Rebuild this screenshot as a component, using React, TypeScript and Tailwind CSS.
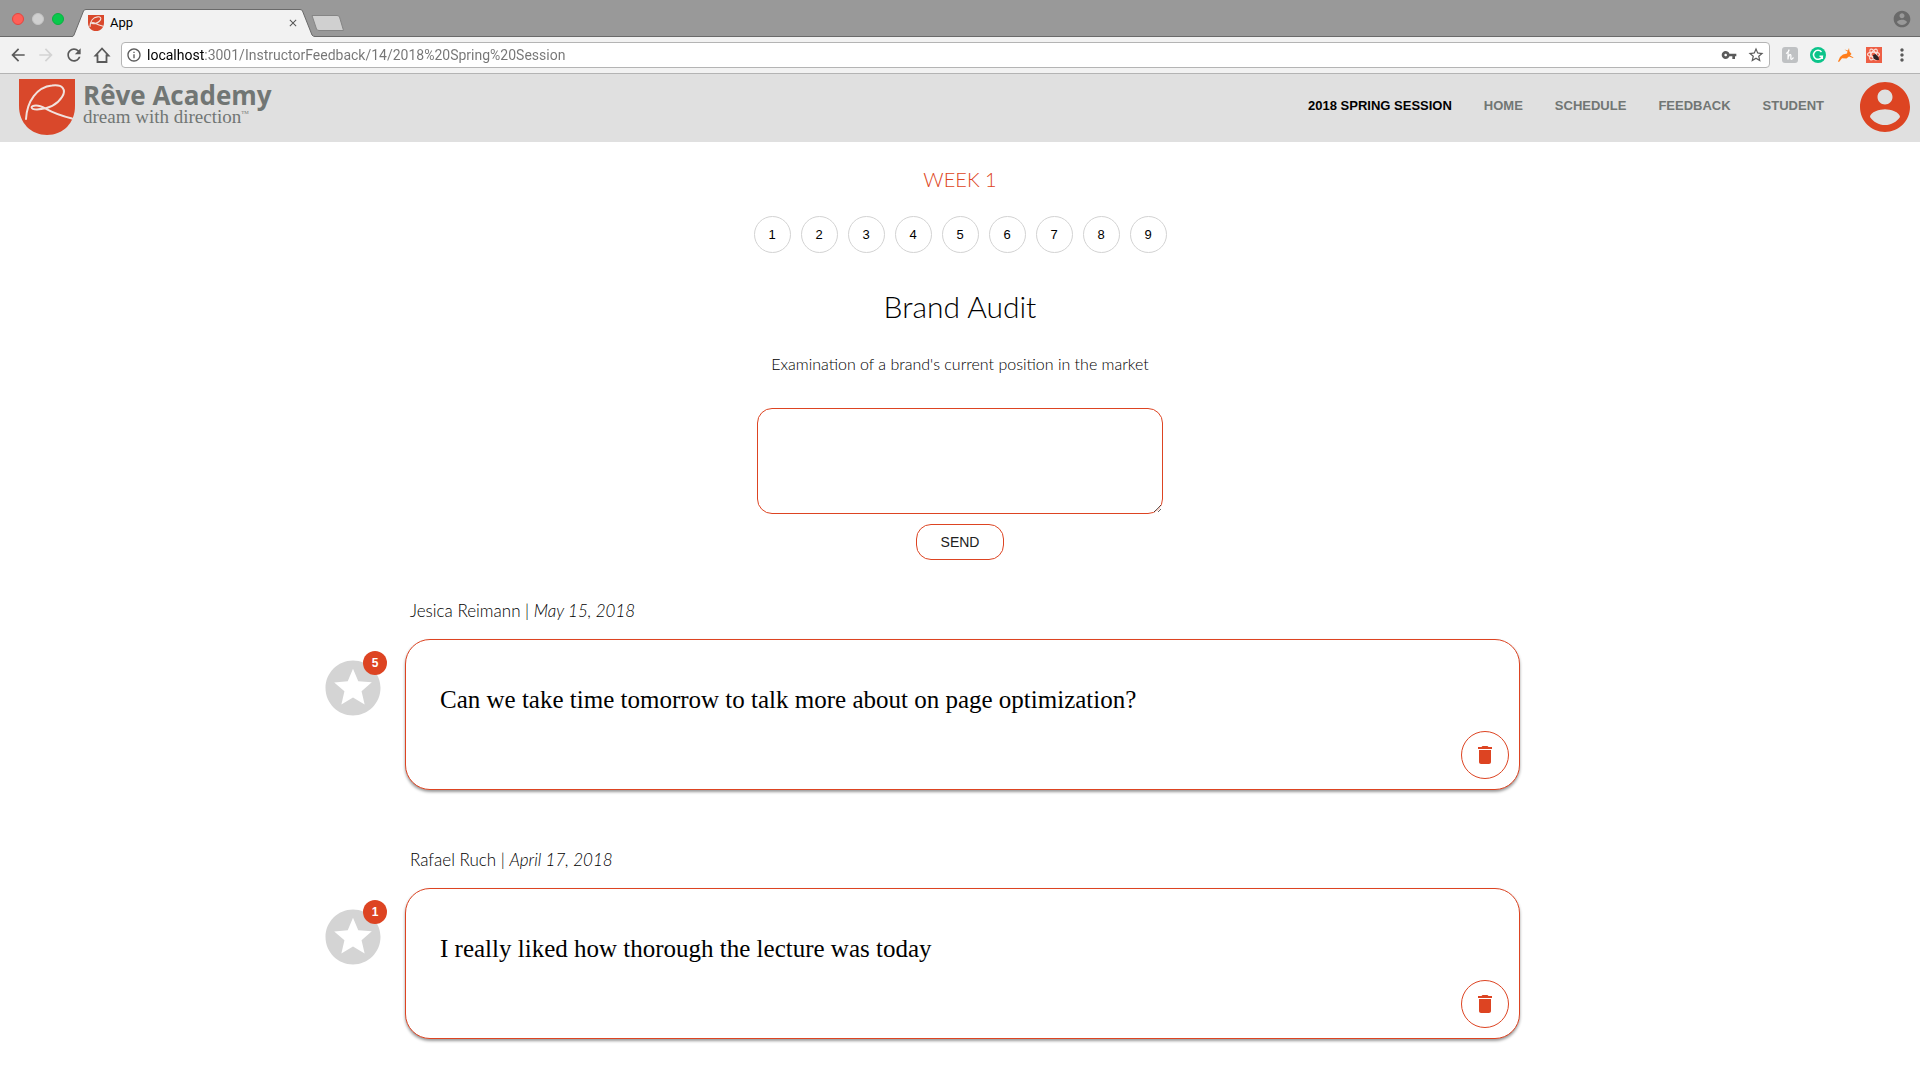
import type { ReactNode } from 'react';

function Icon({ d, className }: { d: string; className: string }) {
  return (
    <svg viewBox="0 0 24 24" fill="currentColor" aria-hidden="true" className={className}>
      <path d={d} />
    </svg>
  );
}

const paths = {
  back: 'M20 11H7.83l5.59-5.59L12 4l-8 8 8 8 1.41-1.41L7.83 13H20v-2z',
  forward: 'M12 4l-1.41 1.41L16.17 11H4v2h12.17l-5.58 5.59L12 20l8-8z',
  reload:
    'M17.65 6.35C16.2 4.9 14.21 4 12 4c-4.42 0-7.99 3.58-7.99 8s3.57 8 7.99 8c3.73 0 6.84-2.55 7.73-6h-2.08c-.82 2.33-3.04 4-5.65 4-3.31 0-6-2.69-6-6s2.69-6 6-6c1.66 0 3.14.69 4.22 1.78L13 11h7V4l-2.35 2.35z',
  info: 'M11 17h2v-6h-2v6zm1-15C6.48 2 2 6.48 2 12s4.48 10 10 10 10-4.48 10-10S17.52 2 12 2zm0 18c-4.41 0-8-3.59-8-8s3.59-8 8-8 8 3.59 8 8-3.59 8-8 8zM11 9h2V7h-2v2z',
  key: 'M12.65 10C11.83 7.67 9.61 6 7 6c-3.31 0-6 2.69-6 6s2.69 6 6 6c2.61 0 4.83-1.67 5.65-4H17v4h4v-4h2v-4H12.65zM7 14c-1.1 0-2-.9-2-2s.9-2 2-2 2 .9 2 2-.9 2-2 2z',
  star: 'M22 9.24l-7.19-.62L12 2 9.19 8.63 2 9.24l5.46 4.73L5.82 21 12 17.27 18.18 21l-1.63-7.03L22 9.24zM12 15.4l-3.76 2.27 1-4.28-3.32-2.88 4.38-.38L12 6.1l1.71 4.04 4.38.38-3.32 2.88 1 4.28L12 15.4z',
  more: 'M12 8c1.1 0 2-.9 2-2s-.9-2-2-2-2 .9-2 2 .9 2 2 2zm0 2c-1.1 0-2 .9-2 2s.9 2 2 2 2-.9 2-2-.9-2-2-2zm0 6c-1.1 0-2 .9-2 2s.9 2 2 2 2-.9 2-2-.9-2-2-2z',
  account:
    'M12 2C6.48 2 2 6.48 2 12s4.48 10 10 10 10-4.48 10-10S17.52 2 12 2zm0 3c1.66 0 3 1.34 3 3s-1.34 3-3 3-3-1.34-3-3 1.34-3 3-3zm0 14.2c-2.5 0-4.71-1.28-6-3.22.03-1.99 4-3.08 6-3.08 1.99 0 5.97 1.09 6 3.08-1.29 1.94-3.5 3.22-6 3.22z',
  stars:
    'M11.99 2C6.47 2 2 6.48 2 12s4.47 10 9.99 10C17.52 22 22 17.52 22 12S17.52 2 11.99 2zm4.24 16L12 15.45 7.77 18l1.12-4.81-3.73-3.23 4.92-.42L12 5l1.92 4.53 4.92.42-3.73 3.23L16.23 18z',
  trash: 'M6 19c0 1.1.9 2 2 2h8c1.1 0 2-.9 2-2V7H6v12zM19 4h-3.5l-1-1h-5l-1 1H5v2h14V4z',
  close: 'M19 6.41L17.59 5 12 10.59 6.41 5 5 6.41 10.59 12 5 17.59 6.41 19 12 13.41 17.59 19 19 17.59 13.41 12z',
};

function Shield({ className, stroke }: { className: string; stroke: number }) {
  return (
    <svg viewBox="0 0 56 56" fill="none" aria-hidden="true" className={className}>
      <path d="M0 0H56V27C56 44 44 56 28 56S0 44 0 27Z" fill="#d9482b" />
      <path
        d="M7 40C8 22 18 8 33 6.500C44 5 47.500 11 43 18C38 26 29 30 18 30.500C11 30.500 11 26.500 17 26.500C26 26.500 26 33 53 39.500"
        stroke="#f1e2de"
        strokeWidth={stroke}
        strokeLinecap="round"
      />
    </svg>
  );
}

function TabStrip() {
  return (
    <div className="flex h-[37px] items-end border-b border-[#6a6a6a] bg-[#999999]">
      <div className="flex h-full w-[72px] items-center gap-2 pt-0.5 pl-3">
        <button aria-label="Close window" className="size-3 rounded-full border border-[#e2463f] bg-[#ff5f57]" />
        <button aria-label="Minimize window" className="size-3 rounded-full border border-[#c4c4c4] bg-[#d0d0d0]" />
        <button aria-label="Zoom window" className="size-3 rounded-full border border-[#0bb040] bg-[#08c94c]" />
      </div>
      <div className="relative -mb-px h-7 w-[243px]">
        <svg viewBox="0 0 243 28" fill="none" aria-hidden="true" className="absolute inset-0 size-full">
          <path d="M0 28L2 26L11.500 2Q12 .5 14 .5H228Q230 .5 230.500 2L240 26L243 28Z" fill="#f2f2f2" />
          <path d="M0 27.500Q1.500 27.500 2 26L11.500 2Q12 .5 14 .5H228Q230 .5 230.500 2L240 26Q241 27.500 243 27.500" stroke="#6a6a6a" />
        </svg>
        <div className="relative flex h-full items-center pr-4 pl-4">
          <Shield className="size-4" stroke={4} />
          <span className="grow pl-1.5 text-[13px] text-black">App</span>
          <button aria-label="Close tab" className="text-[#555]">
            <Icon d={paths.close} className="size-3" />
          </button>
        </div>
      </div>
      <button aria-label="New tab" className="mb-1 -ml-1">
        <svg viewBox="0 0 34 17" fill="none" aria-hidden="true" className="h-[17px] w-[34px]">
          <path d="M2 .5H26Q28 .5 28.500 2L32.500 15.500H8Q6 15.500 5.500 14L1 .5Z" fill="#d0d0d0" stroke="#858585" />
        </svg>
      </button>
      <button aria-label="Chrome profile" className="mr-2 mb-[7px] ml-auto text-[#6a6a6a]">
        <Icon d={paths.account} className="size-5" />
      </button>
    </div>
  );
}

function ToolButton({ label, className, children }: { label: string; className?: string; children: ReactNode }) {
  return (
    <button aria-label={label} className={className}>
      {children}
    </button>
  );
}

function Toolbar() {
  return (
    <div className="flex h-[37px] items-center border-b border-[#b4b4b4] bg-[#f2f2f2] text-[#5a5a5a]">
      <div className="flex w-[121px] items-center gap-2 pl-2">
        <ToolButton label="Back">
          <Icon d={paths.back} className="size-5" />
        </ToolButton>
        <ToolButton label="Forward" className="text-[#d3d3d3]">
          <Icon d={paths.forward} className="size-5" />
        </ToolButton>
        <ToolButton label="Reload">
          <Icon d={paths.reload} className="size-5" />
        </ToolButton>
        <ToolButton label="Home">
          <svg viewBox="0 0 20 20" fill="none" stroke="currentColor" strokeWidth="1.800" aria-hidden="true" className="size-5">
            <path d="M10 3.500L3.500 10.500H5.500V17H14.500V10.500H16.500Z" />
          </svg>
        </ToolButton>
      </div>
      <div className="flex h-[26px] grow items-center rounded border border-[#b4b4b4] bg-white pl-1">
        <Icon d={paths.info} className="size-4" />
        <input
          aria-label="Address"
          readOnly
          value="localhost:3001/InstructorFeedback/14/2018%20Spring%20Session"
          className="ml-[5px] min-w-0 grow bg-[linear-gradient(to_right,#000_58px,#757575_58px)] bg-clip-text text-[14px] text-transparent outline-none"
        />
        <div className="flex items-center gap-2.5 pr-1">
          <ToolButton label="Saved passwords">
            <Icon d={paths.key} className="size-4" />
          </ToolButton>
          <ToolButton label="Bookmark">
            <Icon d={paths.star} className="size-[18px]" />
          </ToolButton>
        </div>
      </div>
      <div className="flex items-center gap-3 pr-2.5 pl-3">
        <ToolButton label="Honey">
          <svg viewBox="0 0 16 16" fill="none" aria-hidden="true" className="size-4">
            <rect width="16" height="16" rx="3" fill="#bfc1c3" />
            <path
              d="M4 6.500C6 5.500 7.500 3 6.800 2.800C6 2.800 6 8 6 12.500C6 9 7.500 7.300 8.500 7.600C9.800 8.200 8 12 9.200 12.300C10.200 12.300 11 11.500 11.500 10.500"
              stroke="#fff"
              strokeWidth="1.300"
            />
          </svg>
        </ToolButton>
        <ToolButton label="Grammarly">
          <svg viewBox="0 0 16 16" fill="none" aria-hidden="true" className="size-4">
            <circle cx="8" cy="8" r="8" fill="#0cc48a" />
            <path d="M11.500 5A4.500 4.500 0 1 0 12.300 9.200H9.500M12.300 8.500V12" stroke="#fff" strokeWidth="1.500" />
          </svg>
        </ToolButton>
        <ToolButton label="Rabbit">
          <svg viewBox="0 0 16 16" fill="#ff7d1a" aria-hidden="true" className="size-4">
            <path d="M0 14.500L2 10L5 7.500L9 6.500L9.500 4.500L6.500 2.500L10 3.500L11 1L11.500 4.500L13.500 7L12 8.500L15.500 10.500L15 11L11 9.500L8.500 11.500L4 11.200L1 15Z" />
          </svg>
        </ToolButton>
        <ToolButton label="React Developer">
          <svg viewBox="0 0 16 16" fill="none" aria-hidden="true" className="size-4">
            <rect width="16" height="16" fill="#ee5f45" />
            <g stroke="#fbe0da" strokeWidth="1.100">
              <ellipse cx="7.500" cy="7.500" rx="6" ry="2.400" />
              <ellipse cx="7.500" cy="7.500" rx="6" ry="2.400" transform="rotate(60 7.500 7.500)" />
              <ellipse cx="7.500" cy="7.500" rx="6" ry="2.400" transform="rotate(120 7.500 7.500)" />
            </g>
            <path d="M7 8L9.500 7L12.500 10L13 13L10 13L7.500 11.500Z" fill="#2c2325" />
          </svg>
        </ToolButton>
        <ToolButton label="Menu">
          <Icon d={paths.more} className="-mx-0.5 size-5" />
        </ToolButton>
      </div>
    </div>
  );
}

function SiteHeader() {
  const links = ['HOME', 'SCHEDULE', 'FEEDBACK', 'STUDENT'];
  return (
    <header className="flex h-[68px] items-center justify-between bg-[#e0e0e0] pr-[5px] pb-0.5 pl-[19px]">
      <a href="#" className="flex items-center gap-2 text-[#717674]">
        <Shield className="size-14" stroke={2} />
        <span className="flex flex-col pb-1">
          <span className="font-['Open_Sans'] text-[26px] leading-6 font-bold">Rêve Academy</span>
          <span className="flex font-['Liberation_Serif'] text-[19px] leading-5">
            dream with direction<span className="text-[5px] leading-3">TM</span>
          </span>
        </span>
      </a>
      <div className="flex items-center gap-[31px]">
        <nav className="flex items-center gap-8 pb-0.5 text-[13px] font-bold text-[#717674]">
          <a href="#" className="text-black">
            2018 SPRING SESSION
          </a>
          {links.map((link) => (
            <a key={link} href="#">
              {link}
            </a>
          ))}
        </nav>
        <button aria-label="Account" className="text-[#dd4422]">
          <Icon d={paths.account} className="size-[60px]" />
        </button>
      </div>
    </header>
  );
}

interface Comment {
  author: string;
  date: string;
  text: string;
  stars: number;
}

const comments: Comment[] = [
  {
    author: 'Jesica Reimann',
    date: 'May 15, 2018',
    text: 'Can we take time tomorrow to talk more about on page optimization?',
    stars: 5,
  },
  { author: 'Rafael Ruch', date: 'April 17, 2018', text: 'I really liked how thorough the lecture was today', stars: 1 },
];

function CommentCard({ author, date, text, stars }: Comment) {
  return (
    <article className="flex">
      <div className="w-[85px] shrink-0 pt-14">
        <button aria-label={`${stars} stars`} className="relative block text-[#d4d4d4]">
          <Icon d={paths.stars} className="size-[66px]" />
          <span className="absolute -top-1 right-[-1px] flex size-6 items-center justify-center rounded-full bg-[#dd4422] text-[12px] font-bold text-white">
            {stars}
          </span>
        </button>
      </div>
      <div className="min-w-0 grow">
        <p className="pl-[5px] font-['Lato'] text-[17px] leading-6 font-light text-black">
          {author} | <em>{date}</em>
        </p>
        <div className="mt-4 flex min-h-[151px] flex-col rounded-[25px] border border-[#dd4422] bg-white pt-[46px] pr-2.5 pb-2.5 pl-[34px] shadow-[0_2px_3px_rgba(0,0,0,0.4)]">
          <p className="font-['Liberation_Serif'] text-[25px] leading-7 text-black">{text}</p>
          <button
            aria-label="Delete comment"
            className="mt-auto flex size-12 shrink-0 items-center justify-center self-end rounded-full border border-[#dd4422] text-[#dd4422]"
          >
            <Icon d={paths.trash} className="size-6" />
          </button>
        </div>
      </div>
    </article>
  );
}

export default function App() {
  const weeks = [1, 2, 3, 4, 5, 6, 7, 8, 9];
  return (
    <div className="min-h-screen bg-white font-['Liberation_Sans',sans-serif]">
      <div className="font-['Roboto',sans-serif]">
        <TabStrip />
        <Toolbar />
      </div>
      <SiteHeader />
      <main className="flex flex-col items-center pt-[23px]">
        <h2 className="font-['Lato'] text-[20px] leading-7 font-light text-[#dd4422]">WEEK 1</h2>
        <div className="mt-[23px] flex gap-2.5">
          {weeks.map((week) => (
            <button
              key={week}
              className="flex size-[37px] items-center justify-center rounded-full border border-[#d3d3d3] text-[13px] text-black"
            >
              {week}
            </button>
          ))}
        </div>
        <h1 className="mt-[35px] font-['Lato'] text-[30px] leading-9 font-light text-black">Brand Audit</h1>
        <p className="mt-7 font-['Lato'] text-[16px] leading-6 font-light text-black">
          Examination of a brand's current position in the market
        </p>
        <textarea
          aria-label="Feedback"
          className="mt-8 h-[106px] w-[406px] rounded-[15px] border border-[#dd4422] p-2 outline-none"
        />
        <button className="mt-2.5 h-9 w-[88px] rounded-[15px] border border-[#dd4422] text-[14px] text-[#212121]">
          SEND
        </button>
        <section className="mt-[39px] flex w-full max-w-[1280px] flex-col gap-[58px] pr-20 pb-10">
          {comments.map((comment) => (
            <CommentCard key={comment.author} {...comment} />
          ))}
        </section>
      </main>
    </div>
  );
}
